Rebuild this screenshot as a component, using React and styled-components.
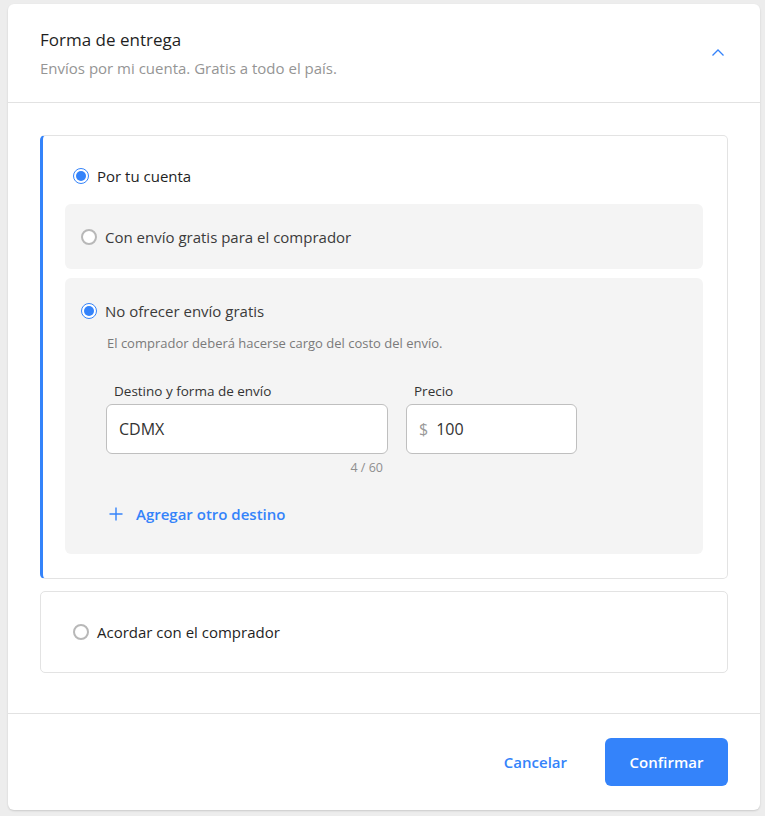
import React, { useState } from 'react'
import styled, { createGlobalStyle } from 'styled-components'

const Global = createGlobalStyle`
  html, body { margin: 0; padding: 0; background: #ededed; }
  body { font-family: "Open Sans", "Liberation Sans", sans-serif; color: #333; }
  * { box-sizing: border-box; }
`

const Page = styled.div`
  padding: 4px 5px 6px 8px;
`

const Card = styled.div`
  background: #fff;
  border-radius: 6px;
  box-shadow: 0 1px 2px rgba(0,0,0,0.15);
  width: 752px;
  height: 806px;
  display: flex;
  flex-direction: column;
`

const Header = styled.div`
  display: flex;
  align-items: flex-start;
  justify-content: space-between;
  padding: 26px 32px 0 32px;
  height: 99px;
  border-bottom: 1px solid #e2e2e2;
`

const Title = styled.h2`
  margin: 0;
  font-size: 17px;
  font-weight: 500;
  color: #1f1f1f;
  line-height: 20px;
`

const Subtitle = styled.p`
  margin: 8px 0 0;
  font-size: 15px;
  color: #959595;
  line-height: 20px;
`

const Chevron = styled.button`
  border: 0;
  background: none;
  padding: 0;
  margin: 18px 3px 0 0;
  width: 14px;
  height: 10px;
  cursor: pointer;
  display: flex;
`

const Body = styled.div`
  flex: 1;
  padding: 32px 32px 0 32px;
  display: flex;
  flex-direction: column;
  gap: 12px;
`

const Option = styled.div`
  border: 1px solid #e3e3e3;
  border-left: ${p => (p.$active ? '3px solid #3483fa' : '1px solid #e3e3e3')};
  border-radius: 5px;
  padding: ${p => (p.$active ? '31px 24px 24px 22px' : '31px 32px 31px 32px')};
`

const OptionHead = styled.div`
  padding-left: ${p => (p.$inset ? '8px' : '0')};
`

const RadioRow = styled.label`
  display: flex;
  align-items: center;
  gap: 8px;
  cursor: pointer;
  font-size: 15px;
  font-weight: ${p => (p.$sub ? 400 : 500)};
  color: ${p => (p.$sub ? '#3b3b3b' : '#1f1f1f')};
  line-height: 18px;
`

const RadioCircle = styled.span`
  width: 16px;
  height: 16px;
  border-radius: 50%;
  border: ${p => (p.$on ? '1px solid #3483fa' : '2px solid #b8b8b8')};
  background: #fff;
  display: flex;
  align-items: center;
  justify-content: center;
  flex-shrink: 0;
  &::after {
    content: '';
    width: 10px;
    height: 10px;
    border-radius: 50%;
    background: ${p => (p.$on ? '#3483fa' : 'transparent')};
  }
`

const SubList = styled.div`
  margin-top: 19px;
  display: flex;
  flex-direction: column;
  gap: 9px;
`

const SubBox = styled.div`
  background: #f4f4f4;
  border-radius: 6px;
  padding: ${p => (p.$open ? '24px 16px 30px 16px' : '24px 16px 23px 16px')};
`

const Hint = styled.p`
  margin: 14px 0 0 26px;
  font-size: 13px;
  color: #7a7a7a;
  line-height: 18px;
`

const Fields = styled.div`
  display: flex;
  gap: 18px;
  margin: 31px 0 0 25px;
`

const Field = styled.div`
  display: flex;
  flex-direction: column;
  width: ${p => p.$w}px;
`

const Label = styled.span`
  font-size: 13.5px;
  color: #333;
  line-height: 16px;
  padding-left: 8px;
  margin-bottom: 5px;
`

const InputBox = styled.div`
  height: 50px;
  border: 1px solid #bfbfbf;
  border-radius: 6px;
  background: #fff;
  display: flex;
  align-items: center;
  padding: 0 12px;
  gap: 8px;
  font-size: 16px;
  color: #333;
`

const Prefix = styled.span`
  color: #999;
`

const Counter = styled.span`
  align-self: flex-end;
  font-size: 12.5px;
  color: #8f8f8f;
  margin-top: 5px;
  padding-right: 5px;
`

const AddLink = styled.button`
  border: 0;
  background: none;
  padding: 0;
  margin: 28px 0 0 28px;
  display: flex;
  align-items: center;
  gap: 13px;
  color: #3483fa;
  font-family: inherit;
  font-size: 15px;
  font-weight: 600;
  cursor: pointer;
`

const Footer = styled.div`
  height: 97px;
  border-top: 1px solid #e2e2e2;
  display: flex;
  align-items: center;
  justify-content: flex-end;
  padding: 0 32px 0 0;
  gap: 38px;
`

const TextButton = styled.button`
  border: 0;
  background: none;
  color: #3483fa;
  font-family: inherit;
  font-size: 15px;
  font-weight: 600;
  cursor: pointer;
  padding: 0;
`

const PrimaryButton = styled.button`
  border: 0;
  background: #3483fa;
  color: #fff;
  font-family: inherit;
  font-size: 15px;
  font-weight: 600;
  width: 123px;
  height: 48px;
  border-radius: 6px;
  cursor: pointer;
`

const Radio = ({ on, label, sub, onClick }) => (
  <RadioRow $sub={sub} onClick={onClick}>
    <RadioCircle $on={on} />
    {label}
  </RadioRow>
)

export default function App() {
  const [mode, setMode] = useState('own')
  const [free, setFree] = useState('no')

  return (
    <>
      <Global />
      <Page>
        <Card>
          <Header>
            <div>
              <Title>Forma de entrega</Title>
              <Subtitle>Envíos por mi cuenta. Gratis a todo el país.</Subtitle>
            </div>
            <Chevron aria-label="Contraer">
              <svg width="14" height="10" viewBox="0 0 14 10" fill="none">
                <path d="M1.5 7.5 L7 2 L12.5 7.5" stroke="#3483fa" strokeWidth="1.3" />
              </svg>
            </Chevron>
          </Header>

          <Body>
            <Option $active={mode === 'own'}>
              <OptionHead $inset>
                <Radio on={mode === 'own'} label="Por tu cuenta" onClick={() => setMode('own')} />
              </OptionHead>
              <SubList>
                <SubBox>
                  <Radio sub on={free === 'yes'} label="Con envío gratis para el comprador" onClick={() => setFree('yes')} />
                </SubBox>
                <SubBox $open>
                  <Radio sub on={free === 'no'} label="No ofrecer envío gratis" onClick={() => setFree('no')} />
                  <Hint>El comprador deberá hacerse cargo del costo del envío.</Hint>
                  <Fields>
                    <Field $w={282}>
                      <Label>Destino y forma de envío</Label>
                      <InputBox>CDMX</InputBox>
                      <Counter>4 / 60</Counter>
                    </Field>
                    <Field $w={171}>
                      <Label>Precio</Label>
                      <InputBox>
                        <Prefix>$</Prefix>100
                      </InputBox>
                    </Field>
                  </Fields>
                  <AddLink>
                    <svg width="14" height="14" viewBox="0 0 14 14">
                      <path d="M7 0.5 V13.5 M0.5 7 H13.5" stroke="#3483fa" strokeWidth="1.4" />
                    </svg>
                    Agregar otro destino
                  </AddLink>
                </SubBox>
              </SubList>
            </Option>

            <Option $active={mode === 'agree'}>
              <Radio on={mode === 'agree'} label="Acordar con el comprador" onClick={() => setMode('agree')} />
            </Option>
          </Body>

          <Footer>
            <TextButton>Cancelar</TextButton>
            <PrimaryButton>Confirmar</PrimaryButton>
          </Footer>
        </Card>
      </Page>
    </>
  )
}
